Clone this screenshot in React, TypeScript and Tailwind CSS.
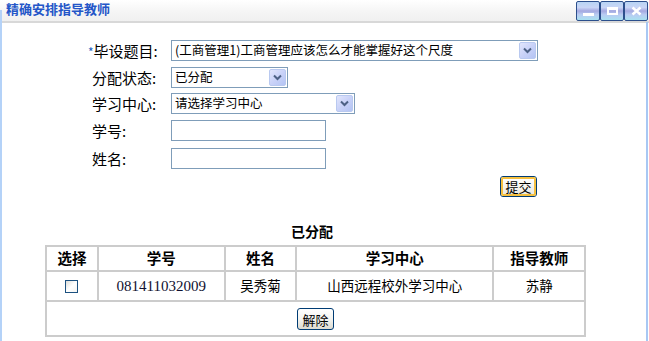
import React from "react";

const cjk = { fontFamily: '"Noto Sans CJK SC", "Liberation Sans", sans-serif' };

function Arrow() {
  return (
    <div className="w-[17px] h-[17px] mr-[1px] flex items-center justify-center rounded-[2px] border border-[#b9c9f0] bg-gradient-to-br from-[#e2e6fc] via-[#c9d2f8] to-[#b4c4f4]">
      <svg width="9" height="7" viewBox="0 0 9 7">
        <path d="M1 1.5 L4.5 5 L8 1.5" stroke="#4d6185" strokeWidth="2" fill="none" />
      </svg>
    </div>
  );
}

function Select({ text, w }: { text: string; w: string }) {
  return (
    <div className={`${w} h-[21px] border border-[#7f9db9] bg-white flex items-center justify-between`}>
      <span className="pl-[3px] text-[12.5px] leading-none text-black whitespace-nowrap" style={cjk}>
        {text}
      </span>
      <Arrow />
    </div>
  );
}

function WinBtn({ children }: { children: React.ReactNode }) {
  return (
    <div className="w-[24px] h-[20px] border border-[#2c4f8c] rounded-[2px] flex items-center justify-center bg-[linear-gradient(180deg,#b8d4f4_0%,#c9d6f6_30%,#a4a8e0_50%,#b9ccf2_70%,#a8e0f0_100%)]">
      {children}
    </div>
  );
}

export default function App() {
  return (
    <div className="w-[649px] h-[341px] bg-white relative overflow-hidden" style={cjk}>
      {/* title bar */}
      <div className="h-[23px] border-b-2 border-[#d8d8d8] bg-gradient-to-b from-white via-[#f6f6f6] to-[#f0f0f0] flex items-start justify-between">
        <div className="pl-[6px] pt-[2px] text-[13px] font-bold text-[#2456c8] leading-[14px]">精确安排指导教师</div>
        <div className="flex pt-[1px] pr-[1px]">
          <WinBtn>
            <div className="w-[11px] h-[3px] bg-white mt-[6px]" />
          </WinBtn>
          <WinBtn>
            <div className="w-[11px] h-[8px] border-2 border-white border-t-[3px]" />
          </WinBtn>
          <WinBtn>
            <svg width="11" height="10" viewBox="0 0 11 10">
              <path d="M1.5 1.5 L9.5 8.5 M9.5 1.5 L1.5 8.5" stroke="white" strokeWidth="2.5" />
            </svg>
          </WinBtn>
        </div>
      </div>
      <div className="absolute left-0 top-[10px] bottom-0 w-[2px] bg-[#b4d2f8]" />
      <div className="absolute right-[1px] top-[22px] bottom-0 w-[2px] bg-[#a8c8f4]" />

      {/* form */}
      <div className="pl-[88px] pt-[17px] text-[15px] text-black">
        <div className="flex items-center h-[21px]">
          <div className="w-[83px] whitespace-nowrap leading-none">
            <span className="text-[#2060c0] text-[12px]">*</span>毕设题目:
          </div>
          <Select text="(工商管理1)工商管理应该怎么才能掌握好这个尺度" w="w-[367px]" />
        </div>
        <div className="flex items-center h-[21px] mt-[6px]">
          <div className="w-[83px] pl-[4px] whitespace-nowrap leading-none">分配状态:</div>
          <Select text="已分配" w="w-[117px]" />
        </div>
        <div className="flex items-center h-[21px] mt-[5px]">
          <div className="w-[83px] pl-[4px] whitespace-nowrap leading-none">学习中心:</div>
          <Select text="请选择学习中心" w="w-[184px]" />
        </div>
        <div className="flex items-center h-[21px] mt-[6px]">
          <div className="w-[83px] pl-[4px] whitespace-nowrap leading-none">学号:</div>
          <div className="w-[155px] h-[21px] border border-[#7f9db9] bg-white" />
        </div>
        <div className="flex items-center h-[21px] mt-[7px]">
          <div className="w-[83px] pl-[4px] whitespace-nowrap leading-none">姓名:</div>
          <div className="w-[155px] h-[21px] border border-[#7f9db9] bg-white" />
        </div>
      </div>

      <div className="flex justify-end pr-[112px] mt-[7px]">
        <div className="w-[37px] h-[21px] rounded-[3px] border border-[#003c74] bg-white flex items-center justify-center">
          <div className="w-[35px] h-[19px] rounded-[2px] border-2 border-[#f5c040] bg-gradient-to-b from-white to-[#eceae0] flex items-center justify-center text-[13px] leading-none text-black">
            提交
          </div>
        </div>
      </div>

      <div className="text-center text-[14px] font-bold text-black leading-none mt-[27px] pr-[25px]">已分配</div>

      <table
        className="ml-[45px] mt-[7px] border border-[#cccccc] border-separate text-black"
        style={{ borderSpacing: 0, width: 541 }}
      >
        <thead>
          <tr className="h-[25px] text-[14.5px] font-bold">
            <th className="w-[52px] border border-[#cccccc] leading-none">选择</th>
            <th className="w-[127px] border border-[#cccccc] leading-none">学号</th>
            <th className="w-[72px] border border-[#cccccc] leading-none">姓名</th>
            <th className="w-[198px] border border-[#cccccc] leading-none">学习中心</th>
            <th className="w-[92px] border border-[#cccccc] leading-none">指导教师</th>
          </tr>
        </thead>
        <tbody>
          <tr className="h-[30px] text-[13.5px] text-center">
            <td className="border border-[#cccccc]">
              <div className="mx-auto w-[13px] h-[13px] border border-[#1c5180] bg-gradient-to-br from-[#dcdcd7] via-white to-[#f4f4f2]" />
            </td>
            <td className="border border-[#cccccc] text-[15px] text-[#101030]" style={{ fontFamily: '"Liberation Serif", serif' }}>
              081411032009
            </td>
            <td className="border border-[#cccccc] leading-none">吴秀菊</td>
            <td className="border border-[#cccccc] leading-none">山西远程校外学习中心</td>
            <td className="border border-[#cccccc] leading-none">苏静</td>
          </tr>
          <tr className="h-[35px]">
            <td colSpan={5} className="border border-[#cccccc]">
              <div className="flex justify-center pt-[1px]">
                <div className="w-[37px] h-[22px] rounded-[3px] border border-[#003c74] bg-gradient-to-b from-white via-[#f4f4f0] to-[#dcdad0] flex items-center justify-center text-[13px] leading-none text-black">
                  解除
                </div>
              </div>
            </td>
          </tr>
        </tbody>
      </table>
    </div>
  );
}
